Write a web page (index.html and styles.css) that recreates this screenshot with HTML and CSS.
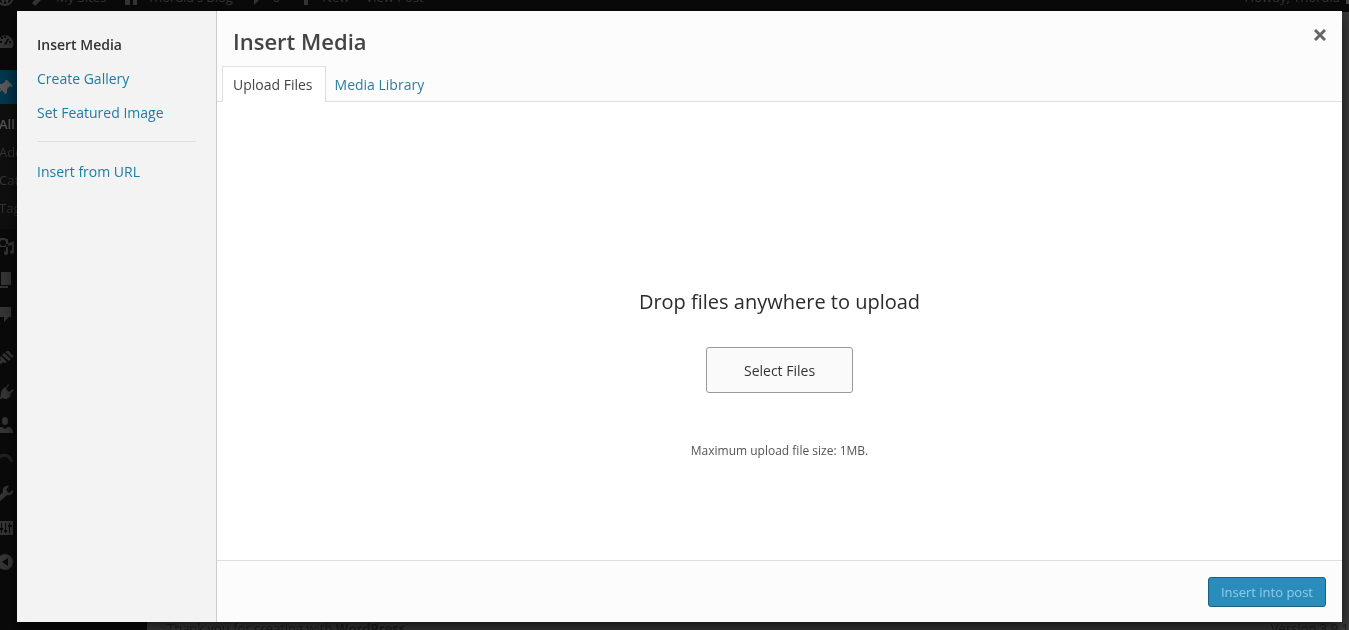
FILE: index.html
```html
<!DOCTYPE html>
<html lang="en">
<head>
<meta charset="utf-8">
<title>Insert Media</title>
<link rel="stylesheet" href="styles.css">
</head>
<body>
<div class="admin" aria-hidden="true">
  <div class="adminbar">
    <svg class="icon wp" viewBox="0 0 20 20"><circle cx="10" cy="10" r="8" fill="none" stroke="currentColor" stroke-width="2"/><path d="M5 6l3 9 2-6 2 6 3-9" fill="none" stroke="currentColor" stroke-width="2"/></svg>
    <div class="bar-item sites"><svg class="icon" viewBox="0 0 20 20"><path d="M18 6l-4 3-3-3 3-3c-3-1-6 2-5 5l-7 8 3 3 7-7c3 1 6-2 6-6z"/></svg>My Sites</div>
    <div class="bar-item blog"><svg class="icon" viewBox="0 0 20 20"><path d="M4 8h12v10h-4v-5H9v5H4z"/></svg>Thordia's Blog</div>
    <div class="bar-item count"><svg class="icon" viewBox="0 0 20 20"><path d="M4 5h13v8h-5l-5 5v-5H4z"/></svg>0</div>
    <div class="bar-item new"><svg class="icon" viewBox="0 0 20 20"><path d="M8 4h4v14H8z"/></svg>New</div>
    <div class="bar-item view">View Post</div>
    <div class="bar-item howdy">Howdy, Thordia <span class="avatar"></span></div>
  </div>
  <div class="admin-main">
    <div class="menu">
      <div class="row"><svg class="icon" viewBox="0 0 20 20"><path fill-rule="evenodd" d="M4 17a8 8 0 1 1 13 0zM9 5h2v2H9zM5 10h2v2H5zm9 0h2v2h-2zM6 6h2v2H6zm7 1l1 1-3 6-2-1z"/></svg></div>
      <div class="row current"><svg class="icon" viewBox="0 0 20 20"><path d="M12 3l6 6-2 1-1-1-3 3v4l-2 1-3-4-5 5-1-1 5-5-4-3 1-2h4l4-3-1-1z"/></svg></div>
      <div class="submenu"><span class="active">All Posts</span><span>Add New</span><span>Categories</span><span>Tags</span></div>
      <div class="row"><svg class="icon" viewBox="0 0 20 20"><path fill-rule="evenodd" d="M2 3h2l1-1h5l1 1h2v8H2zm6 1a3 3 0 1 0 0 6 3 3 0 0 0 0-6zM11 8l8-3v11a2 2 0 1 1-2-2V9l-4 1v7a2 2 0 1 1-2-2z"/></svg></div>
      <div class="row"><svg class="icon" viewBox="0 0 20 20"><path d="M6 2h10v13H6zM3 5h2v11h8v2H3z"/></svg></div>
      <div class="row"><svg class="icon" viewBox="0 0 20 20"><path d="M4 3h12v10h-2l-5 5v-5H4z"/></svg></div>
      <div class="row gap"><svg class="icon" viewBox="0 0 20 20"><path d="M14 3l2 3 3 2-2 2-7-6 2-1zM9 5l7 6-2 2-7-6zM6 8l6 6-2 1-2-1-5 4-1-1 4-5-1-2z"/></svg></div>
      <div class="row"><svg class="icon" viewBox="0 0 20 20"><path d="M13 2l1 1-3 4 3 3 4-3 1 1-4 4 1 1c-2 4-6 5-9 3l-4 3-1-1 4-4c-1-3 1-7 4-9l1 1z"/></svg></div>
      <div class="row"><svg class="icon" viewBox="0 0 20 20"><ellipse cx="10" cy="5" rx="3" ry="4"/><path d="M2 17c0-5 3-6 5-6l3 2 3-2c2 0 5 1 5 6z"/></svg></div>
      <div class="row dim"><svg class="icon" viewBox="0 0 20 20"><path d="M3 9c3-5 11-6 14 3" fill="none" stroke="currentColor" stroke-width="3"/></svg></div>
      <div class="row"><svg class="icon" viewBox="0 0 20 20"><path d="M18 6l-4 3-3-3 3-4c-4-1-7 2-6 6l-7 7 3 3 8-7c4 1 7-2 6-5z"/></svg></div>
      <div class="row"><svg class="icon" viewBox="0 0 20 20"><path fill-rule="evenodd" d="M2 3h16v14H2zM6 5v5H4v2h2v3h1v-3h1v-2H7V5zm4 0v7H9v2h1v1h1v-1h1v-2h-1V5zm4 0v2h-1v2h1v6h1V9h2V7h-2V5z"/></svg></div>
      <div class="row"><svg class="icon" viewBox="0 0 20 20"><path fill-rule="evenodd" d="M10 2a8 8 0 1 0 0 16 8 8 0 0 0 0-16zm3 4v8l-6-4z"/></svg></div>
    </div>
    <div class="page"><span>Thank you for creating with <b>WordPress</b>.</span><span>Version 3.9.1</span></div>
  </div>
</div>

<div class="overlay">
  <div class="modal" role="dialog" aria-label="Insert Media">
    <nav class="sidebar">
      <a class="selected" href="#insert">Insert Media</a>
      <a href="#gallery">Create Gallery</a>
      <a href="#featured">Set Featured Image</a>
      <hr>
      <a href="#url">Insert from URL</a>
    </nav>
    <section class="frame">
      <header class="head">
        <div class="title-row">
          <h1>Insert Media</h1>
          <button class="close" type="button" aria-label="Close"><svg viewBox="0 0 12 12"><path d="M1 1l10 10M11 1L1 11"/></svg></button>
        </div>
        <nav class="tabs">
          <a class="tab open" href="#upload">Upload Files</a>
          <a class="tab" href="#library">Media Library</a>
        </nav>
      </header>
      <main class="uploader">
        <h2>Drop files anywhere to upload</h2>
        <button class="select" type="button">Select Files</button>
        <p>Maximum upload file size: 1MB.</p>
      </main>
      <footer class="foot"><button class="insert" type="button" disabled>Insert into post</button></footer>
    </section>
  </div>
</div>
</body>
</html>
```
FILE: styles.css
```css
* { box-sizing: border-box; }
body {
  margin: 0;
  font-family: "Open Sans", sans-serif;
  font-size: 14px;
  color: #333;
  background: #3b3b3b;
}
a { color: #1a7da5; text-decoration: none; }
h1, h2, p { margin: 0; font-weight: 400; }
button { font: inherit; }

/* Dimmed admin screen, scrolled slightly under the dialog */
.admin {
  position: fixed;
  inset: -20px 0 -4px -13px;
  display: flex;
  flex-direction: column;
  overflow: hidden;
  color: #353535;
}
.icon { width: 20px; height: 20px; fill: currentColor; flex: none; }
.adminbar {
  display: flex;
  flex: none;
  height: 32px;
  padding-left: 8px;
  background: #0a0a0a;
  font-size: 13px;
  line-height: 34px;
}
.adminbar .icon { margin-top: 7px; }
.bar-item { display: flex; gap: 6px; white-space: nowrap; }
.sites { margin-left: 15px; }
.blog { margin-left: 15px; }
.count { margin-left: 14px; }
.new { margin-left: 16px; }
.view { margin-left: 16px; }
.howdy { margin-left: auto; }
.avatar { width: 16px; height: 16px; margin-top: 8px; margin-right: -13px; background: #444; }
.admin-main { display: flex; flex: 1; min-height: 0; }
.menu { width: 160px; padding-top: 12px; background: #0a0a0a; }
.row { display: flex; align-items: center; height: 34px; padding-left: 8px; }
.row.current { margin-top: 12px; background: #00374f; color: #5a5a5a; }
.row.gap { margin-top: 10px; }
.row.dim { color: #222; }
.submenu {
  display: flex;
  flex-direction: column;
  padding: 6px 0 7px 12px;
  background: #0f0f0f;
  font-size: 13px;
  line-height: 28px;
}
.submenu .active { color: #555; font-weight: 600; }
.page {
  flex: 1;
  display: flex;
  justify-content: space-between;
  align-items: flex-end;
  padding: 0 0 0 20px;
  color: #202020;
  font-size: 13px;
  line-height: 12px;
  white-space: nowrap;
}

/* Dialog */
.overlay { position: fixed; inset: 0; display: grid; padding: 11px 7px 8px 17px; }
.modal {
  display: grid;
  grid-template-columns: 200px 1fr;
  background: #fff;
  box-shadow: 0 5px 15px rgba(0, 0, 0, .7);
}
.sidebar {
  display: flex;
  flex-direction: column;
  padding: 20px 20px 0;
  background: #f3f3f3;
  border-right: 1px solid #ccc;
  line-height: 18px;
}
.sidebar a { padding: 5px 0 11px; }
.sidebar a.selected { color: #333; font-weight: 600; }
.sidebar hr { width: 100%; height: 1px; margin: 8px 0 16px; border: 0; background: #ddd; }
.frame { display: flex; flex-direction: column; min-width: 0; }
.head { background: #fcfcfc; border-bottom: 1px solid #dfdfdf; }
.title-row { display: flex; justify-content: space-between; height: 55px; padding: 0 16px; }
h1 { font-size: 22px; font-weight: 600; line-height: 60px; color: #444; }
.close { width: 12px; height: 12px; margin-top: 18px; padding: 0; border: 0; background: none; }
.close svg { display: block; width: 12px; height: 12px; fill: none; stroke: #666; stroke-width: 3; }
.tabs { display: flex; margin-bottom: -1px; padding-left: 5px; }
.tab { padding: 9px 8px 8px; border: 1px solid transparent; border-bottom: 0; line-height: 18px; color: #2e7d9f; }
.tab.open { padding: 9px 12px 8px 10px; background: #fff; border-color: #dfdfdf; color: #444; }
.uploader {
  flex: 1;
  display: flex;
  flex-direction: column;
  align-items: center;
  justify-content: center;
  padding-top: 87px;
}
h2 { font-size: 20px; line-height: 28px; color: #2b2b2b; }
.select {
  height: 46px;
  margin: 31px 0 48px;
  padding: 0 37px;
  color: #333;
  background: #fafafa;
  border: 1px solid #999;
  border-radius: 3px;
}
.uploader p { font-size: 12px; line-height: 20px; color: #555; }
.foot { display: flex; justify-content: flex-end; padding: 16px; background: #fcfcfc; border-top: 1px solid #dfdfdf; }
.insert {
  height: 30px;
  padding: 0 12px;
  margin-bottom: -1px;
  font-size: 13px;
  color: #94cde7;
  background: #298cba;
  border: 1px solid #1b607f;
  border-radius: 3px;
}
```
